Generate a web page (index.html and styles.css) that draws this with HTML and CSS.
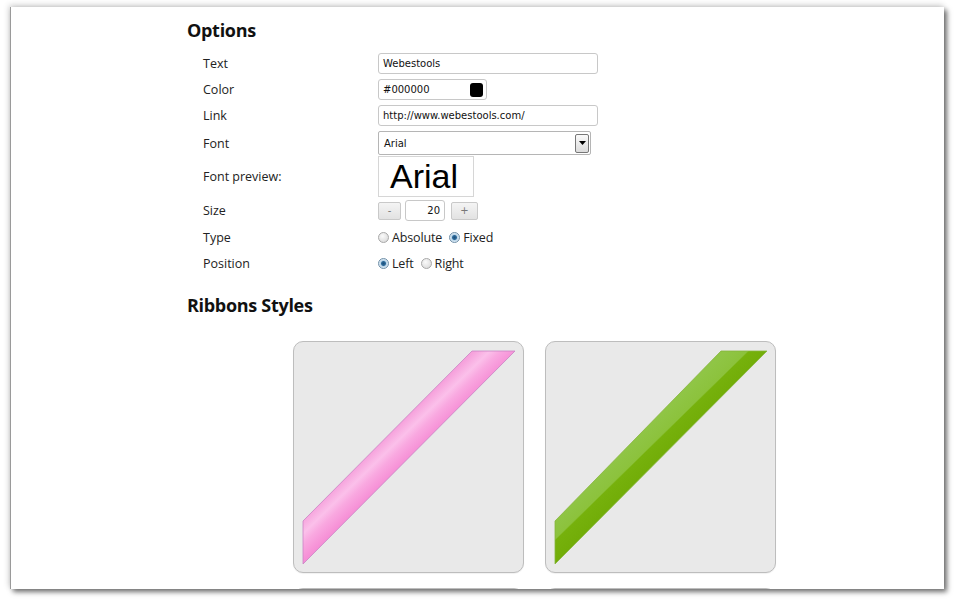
FILE: index.html
```html
<!DOCTYPE html>
<html>
<head>
<meta charset="utf-8">
<link rel="stylesheet" href="styles.css">
</head>
<body>
<div class="window">
  <div class="content">
    <h2 class="heading">Options</h2>
    <div class="options">
      <div class="row r1">
        <span class="label">Text</span>
        <div class="field wide">Webestools</div>
      </div>
      <div class="row r2">
        <span class="label">Color</span>
        <div class="field color">#000000<span class="swatch"></span></div>
      </div>
      <div class="row r3">
        <span class="label">Link</span>
        <div class="field wide">http://www.webestools.com/</div>
      </div>
      <div class="row r4">
        <span class="label">Font</span>
        <div class="select"><span class="select-text">Arial</span><span class="select-btn"><svg width="7" height="4" viewBox="0 0 7 4"><path d="M0 0h7L3.5 4z" fill="#000"/></svg></span></div>
      </div>
      <div class="row r5">
        <span class="label">Font preview:</span>
        <div class="preview">Arial</div>
      </div>
      <div class="row r6">
        <span class="label">Size</span>
        <div class="size">
          <span class="btn">-</span>
          <span class="num">20</span>
          <span class="btn">+</span>
        </div>
      </div>
      <div class="row r7">
        <span class="label">Type</span>
        <div class="radios">
          <span class="radio"></span><span class="rlabel">Absolute</span>
          <span class="radio checked"></span><span class="rlabel">Fixed</span>
        </div>
      </div>
      <div class="row r8">
        <span class="label">Position</span>
        <div class="radios">
          <span class="radio checked"></span><span class="rlabel">Left</span>
          <span class="radio"></span><span class="rlabel">Right</span>
        </div>
      </div>
    </div>
    <h2 class="heading heading2">Ribbons Styles</h2>
    <div class="cards">
      <div class="card">
        <svg width="230" height="231" viewBox="0 0 230 231">
          <defs>
            <linearGradient id="pink" gradientUnits="userSpaceOnUse" x1="93.5" y1="94" x2="115" y2="116">
              <stop offset="0" stop-color="#f6a2dc"/>
              <stop offset="0.35" stop-color="#fbc0ea"/>
              <stop offset="0.6" stop-color="#f9a8e0"/>
              <stop offset="1" stop-color="#f68fd6"/>
            </linearGradient>
          </defs>
          <polygon points="178,9 221,9 9,222 9,179" fill="url(#pink)" stroke="#c883c4" stroke-width="0.8"/>
        </svg>
      </div>
      <div class="card">
        <svg width="230" height="231" viewBox="0 0 230 231">
          <defs>
            <linearGradient id="green" gradientUnits="userSpaceOnUse" x1="93.5" y1="94" x2="115" y2="116">
              <stop offset="0" stop-color="#8fc545"/>
              <stop offset="0.48" stop-color="#8cc23c"/>
              <stop offset="0.52" stop-color="#76b10c"/>
              <stop offset="1" stop-color="#72ad08"/>
            </linearGradient>
          </defs>
          <polygon points="175,9 221,9 9,222 9,179" fill="url(#green)" stroke="#86b53c" stroke-width="0.8"/>
        </svg>
      </div>
      <div class="card"></div>
      <div class="card"></div>
    </div>
  </div>
</div>
</body>
</html>
```
FILE: styles.css
```css
html, body {
  margin: 0;
  padding: 0;
  background: #ffffff;
  width: 954px;
  height: 600px;
  overflow: hidden;
}

.window {
  margin: 7px 0 0 10px;
  width: 934px;
  height: 582px;
  background: #ffffff;
  border-left: 1px solid #9a9a9a;
  box-sizing: border-box;
  overflow: hidden;
  box-shadow: 3px 3px 5px rgba(0, 0, 0, 0.55), -1px -2px 6px rgba(0, 0, 0, 0.18);
}

.content {
  padding: 11px 0 0 176px;
  font-family: "Open Sans", "DejaVu Sans", sans-serif;
  color: #222;
}

.heading {
  margin: 0;
  font-family: "Open Sans", sans-serif;
  font-weight: 700;
  font-size: 18px;
  line-height: 24px;
  height: 24px;
  letter-spacing: -0.3px;
  color: #111;
}

.options {
  margin-top: 11px;
  padding-left: 16px;
}

.row {
  display: flex;
  align-items: center;
}

.label {
  width: 175px;
  font-size: 12.5px;
  color: #222;
  flex: none;
}

.r1 { height: 21px; margin-bottom: 5px; }
.r2 { height: 21px; margin-bottom: 5px; }
.r3 { height: 21px; margin-bottom: 5px; }
.r4 { height: 24px; margin-bottom: 1px; }
.r5 { height: 41px; margin-bottom: 3px; }
.r6 { height: 21px; margin-bottom: 6px; }
.r7 { height: 20px; margin-bottom: 6px; }
.r8 { height: 20px; }

.field {
  box-sizing: border-box;
  height: 21px;
  border: 1px solid #c8c8c8;
  border-radius: 3px;
  padding: 0 4px;
  font-family: "DejaVu Sans", Verdana, sans-serif;
  font-size: 10px;
  line-height: 19px;
  color: #111;
  background: #fff;
}

.wide { width: 220px; }

.color {
  width: 109px;
  display: flex;
  align-items: center;
  justify-content: space-between;
  padding-right: 3px;
}

.swatch {
  width: 13px;
  height: 14px;
  background: #000;
  border-radius: 3px;
}

.select {
  box-sizing: border-box;
  width: 213px;
  height: 24px;
  border: 1px solid #b5b5b5;
  border-radius: 2px;
  display: flex;
  align-items: center;
  justify-content: space-between;
  padding: 0 1px 0 5px;
  background: #fff;
}

.select-text {
  font-family: "DejaVu Sans", Verdana, sans-serif;
  font-size: 10px;
  color: #111;
}

.select-btn {
  box-sizing: border-box;
  width: 14px;
  height: 19px;
  border: 1px solid #777;
  border-radius: 2px;
  background: linear-gradient(#fafafa, #dcdcdc);
  display: flex;
  align-items: center;
  justify-content: center;
}

.preview {
  box-sizing: border-box;
  width: 96px;
  height: 41px;
  border: 1px solid #d6d6d6;
  font-family: "Liberation Sans", Arial, sans-serif;
  font-size: 34px;
  line-height: 39px;
  padding-left: 11px;
  color: #000;
}

.size {
  display: flex;
  align-items: center;
}

.btn {
  box-sizing: border-box;
  width: 23px;
  height: 18px;
  border: 1px solid #c9c9c9;
  border-radius: 2px;
  background: linear-gradient(#f4f4f4, #e2e2e2);
  font-family: "DejaVu Sans", sans-serif;
  font-size: 10px;
  line-height: 15px;
  text-align: center;
  color: #777;
}

.btn:last-child {
  width: 27px;
}

.num {
  box-sizing: border-box;
  width: 40px;
  height: 21px;
  margin: 0 6px 0 4px;
  border: 1px solid #c8c8c8;
  border-radius: 3px;
  font-family: "DejaVu Sans", Verdana, sans-serif;
  font-size: 10px;
  line-height: 19px;
  text-align: right;
  padding-right: 4px;
  color: #111;
}

.radios {
  display: flex;
  align-items: center;
}

.radio {
  box-sizing: border-box;
  width: 11px;
  height: 11px;
  border-radius: 50%;
  border: 1px solid #a8a8a8;
  background: radial-gradient(circle at 40% 35%, #fafafa, #d4d4d4);
  margin-right: 3px;
}

.radio.checked {
  border-color: #6f8fa8;
  background: radial-gradient(circle, #1d4f7a 0, #2d6a9a 2px, #b9d4e8 3px, #e8f1f8 5px);
}

.rlabel {
  font-size: 12.5px;
  letter-spacing: -0.15px;
  color: #222;
  margin-right: 7px;
}

.heading2 {
  margin-top: 20px;
}

.cards {
  margin: 24px 0 0 106px;
  display: grid;
  grid-template-columns: 231px 231px;
  column-gap: 21px;
  row-gap: 15px;
}

.card {
  box-sizing: border-box;
  width: 231px;
  height: 232px;
  border: 1px solid #bdbdbd;
  border-radius: 10px;
  background: #e9e9e9;
  overflow: hidden;
  box-shadow: 0 1px 1px rgba(0, 0, 0, 0.06);
}

.card svg {
  display: block;
}
```
